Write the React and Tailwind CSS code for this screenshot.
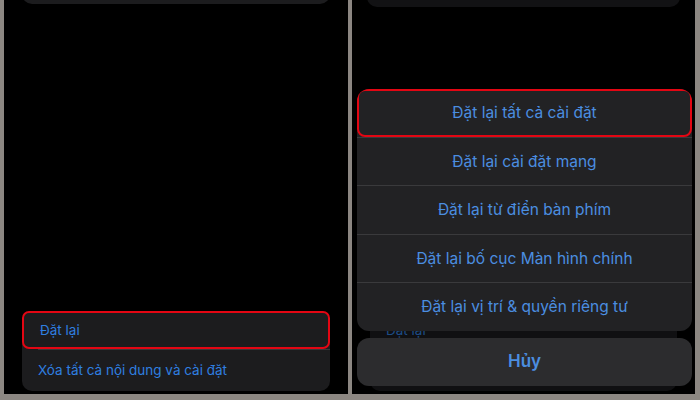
const font = { fontFamily: "Inter, 'Noto Sans', sans-serif" };

const sheetItems = [
	"Đặt lại tất cả cài đặt",
	"Đặt lại cài đặt mạng",
	"Đặt lại từ điển bàn phím",
	"Đặt lại bố cục Màn hình chính",
	"Đặt lại vị trí & quyền riêng tư",
];

function ResetCard({ dim }) {
	return (
		<div
			className={`mx-[18px] mb-[3px] rounded-[10px] ${
				dim ? "bg-[#101012]" : "bg-[#1c1c1e]"
			}`}
		>
			<div
				className={`h-[38px] flex items-center pl-[16px] rounded-[7px] text-[13.5px] ${
					dim
						? "text-[#1d4c85]"
						: "border-2 border-[#e30613] pl-[14px] text-[#2f7fe0]"
				}`}
			>
				Đặt lại
			</div>
			<div className={`ml-[16px] h-px ${dim ? "bg-[#1a1a1c]" : "bg-[#38383a]"}`} />
			<div
				className={`h-[41px] flex items-center pl-[16px] text-[13.5px] ${
					dim ? "text-[#1d4c85]" : "text-[#2f7fe0]"
				}`}
			>
				Xóa tất cả nội dung và cài đặt
			</div>
		</div>
	);
}

export default function App() {
	return (
		<div
			className="w-[700px] h-[400px] bg-[#8c8782] flex gap-[4px] pl-[4px] pr-[5px] pb-[6px]"
			style={font}
		>
			<div className="w-[344px] bg-black flex flex-col overflow-hidden">
				<div className="mx-[18px] -mt-[36px] h-[40px] rounded-[10px] bg-[#1c1c1e]" />
				<div className="flex-1" />
				<ResetCard />
			</div>

			<div className="relative flex-1 bg-black flex flex-col overflow-hidden">
				<div className="mx-[15px] -mt-[33px] h-[40px] rounded-[10px] bg-[#121214]" />
				<div className="flex-1" />
				<ResetCard dim />

				<div className="absolute left-[5px] right-[3px] top-[89px] flex flex-col gap-[7px]">
					<div className="rounded-[12px] bg-[#222224] overflow-hidden">
						{sheetItems.map((t, i) => (
							<div key={t}>
								{i > 0 && <div className="h-px bg-[#3a3a3c]" />}
								<div
									className={`h-[47.5px] flex items-center justify-center text-[15.5px] text-[#4b8ee0] ${
										i === 0 ? "border-2 border-[#e30613] rounded-[8px]" : ""
									}`}
								>
									{t}
								</div>
							</div>
						))}
					</div>
					<div className="h-[48px] rounded-[12px] bg-[#2c2c2e] flex items-center justify-center text-[17px] font-semibold text-[#4b8ee0]">
						Hủy
					</div>
				</div>
			</div>
		</div>
	);
}
